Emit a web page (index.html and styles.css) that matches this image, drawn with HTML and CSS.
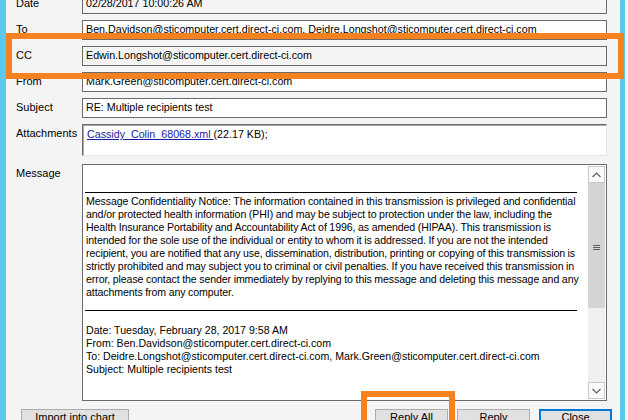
FILE: index.html
```html
<!DOCTYPE html>
<html lang="en">
<head>
    <meta charset="UTF-8">
    <title>Message</title>
    <link rel="stylesheet" href="styles.css">
</head>
<body>
    <div class="window">
        <div class="edge left"></div>
        <div class="main">
            <div class="form">
                <div class="label">Date</div>
                <div class="field readonly">02/28/2017 10:00:26 AM</div>

                <div class="label">To</div>
                <div class="field">Ben.Davidson@sticomputer.cert.direct-ci.com, Deidre.Longshot@sticomputer.cert.direct-ci.com</div>

                <div class="label">CC</div>
                <div class="field readonly">Edwin.Longshot@sticomputer.cert.direct-ci.com</div>

                <div class="label">From</div>
                <div class="field">Mark.Green@sticomputer.cert.direct-ci.com</div>

                <div class="label">Subject</div>
                <div class="field">RE: Multiple recipients test</div>

                <div class="label">Attachments</div>
                <div class="field attach"><a class="link">Cassidy_Colin_68068.xml </a>(22.17 KB);</div>

                <div class="label msg-label">Message</div>
                <div class="field message">
                    <div class="body">
                        <div class="rule first"></div>
                        <div class="notice">
                            <div class="line">Message Confidentiality Notice: The information contained in this transmission is privileged and confidential</div>
                            <div class="line">and/or protected health information (PHI) and may be subject to protection under the law, including the</div>
                            <div class="line">Health Insurance Portability and Accountability Act of 1996, as amended (HIPAA). This transmission is</div>
                            <div class="line">intended for the sole use of the individual or entity to whom it is addressed. If you are not the intended</div>
                            <div class="line">recipient, you are notified that any use, dissemination, distribution, printing or copying of this transmission is</div>
                            <div class="line">strictly prohibited and may subject you to criminal or civil penalties. If you have received this transmission in</div>
                            <div class="line">error, please contact the sender immediately by replying to this message and deleting this message and any</div>
                            <div class="line">attachments from any computer.</div>
                        </div>
                        <div class="rule second"></div>
                        <div class="line">Date: Tuesday, February 28, 2017 9:58 AM</div>
                        <div class="line">From: Ben.Davidson@sticomputer.cert.direct-ci.com</div>
                        <div class="line">To: Deidre.Longshot@sticomputer.cert.direct-ci.com, Mark.Green@sticomputer.cert.direct-ci.com</div>
                        <div class="line">Subject: Multiple recipients test</div>
                    </div>
                    <div class="scrollbar">
                        <div class="arrow">
                            <svg width="9" height="6" viewBox="0 0 9 6"><path d="M0.5 5 L4.5 1 L8.5 5" fill="none" stroke="#606060" stroke-width="1.2"/></svg>
                        </div>
                        <div class="thumb">
                            <svg width="7" height="7" viewBox="0 0 7 7"><path d="M0 1.5 H7 M0 3.5 H7 M0 5.5 H7" stroke="#606060" stroke-width="1"/></svg>
                        </div>
                        <div class="track"></div>
                        <div class="arrow down">
                            <svg width="9" height="6" viewBox="0 0 9 6"><path d="M0.5 1 L4.5 5 L8.5 1" fill="none" stroke="#606060" stroke-width="1.2"/></svg>
                        </div>
                    </div>
                </div>
            </div>
            <div class="buttons">
                <button class="btn import">Import into chart</button>
                <div class="btn-group">
                    <button class="btn">Reply All</button>
                    <button class="btn">Reply</button>
                    <button class="btn default">Close</button>
                </div>
            </div>
        </div>
        <div class="edge right"></div>
        <div class="outside"></div>

        <div class="highlight cc-mark"></div>
        <div class="highlight reply-mark"></div>
    </div>
</body>
</html>
```

FILE: styles.css
```css
body {
    margin: 0;
    background: #f4f4f4;
    font-family: "Liberation Sans", Arial, sans-serif;
    font-size: 10.7px;
    color: #000;
    overflow: hidden;
}
.window {
    position: relative;
    display: flex;
    width: 628px;
    height: 420px;
    overflow: hidden;
}
.edge {
    width: 6px;
    background: #5cc8ee;
}
.edge.right {
    width: 5px;
}
.outside {
    width: 3px;
    background: #f6f6f6;
}
.main {
    width: 614px;
    padding-left: 10px;
    box-sizing: border-box;
}
.form {
    display: grid;
    grid-template-columns: 66px 525px;
    row-gap: 6px;
    margin-top: -6px;
}
.label {
    padding-top: 3px;
    line-height: 13px;
    font-size: 11px;
}
.field {
    height: 20px;
    box-sizing: border-box;
    border: 1px solid #6b6b6b;
    background: #fff;
    padding: 2px 3px 0;
    line-height: 13px;
    white-space: nowrap;
    overflow: hidden;
}
.field.readonly {
    background: #f4f4f4;
}
.field.attach {
    height: 32px;
    border-color: #6b6b6b #e6e6e6 #e6e6e6 #6b6b6b;
    box-shadow: inset 1px 1px #a8a8a8;
    padding: 3px 3px 0 4px;
}
.link {
    color: #1a1aa0;
    text-decoration: underline;
}
.msg-label {
    margin-top: 2px;
}
.field.message {
    margin-top: 2px;
    height: 237px;
    padding: 0;
    display: flex;
}
.body {
    flex: 1;
    min-width: 0;
    overflow: hidden;
    padding-left: 3px;
    font-size: 10.6px;
}
.notice {
    letter-spacing: -0.1px;
    word-spacing: -0.2px;
}
.rule {
    width: 492px;
    height: 1px;
    background: #000;
    margin-left: -1px;
}
.rule.first {
    margin-top: 27px;
    margin-bottom: 2px;
}
.rule.second {
    margin-top: 11px;
    margin-bottom: 13px;
}
.line {
    line-height: 13px;
    height: 13px;
}
.scrollbar {
    flex: none;
    width: 17px;
    margin: 1px 1px 1px 0;
    display: flex;
    flex-direction: column;
    background: #f0f0f0;
}
.arrow {
    height: 17px;
    box-sizing: border-box;
    border: 1px solid #c8c8c8;
    background: #fafafa;
    display: flex;
    align-items: center;
    justify-content: center;
}
.thumb {
    height: 125px;
    background: #d4d4d4;
    display: flex;
    align-items: center;
    justify-content: center;
    padding-top: 4px;
    box-sizing: border-box;
}
.track {
    flex: 1;
}
.buttons {
    display: flex;
    justify-content: space-between;
    margin-top: 8px;
    padding-left: 5px;
    width: 591px;
}
.btn-group {
    display: flex;
    gap: 9px;
}
.btn {
    height: 23px;
    width: 73px;
    box-sizing: border-box;
    border: 1px solid #adadad;
    background: #e1e1e1;
    font-family: "Liberation Sans", Arial, sans-serif;
    font-size: 11px;
    line-height: 13px;
    padding: 1px 0 0;
    color: #000;
    text-align: center;
    display: flex;
    justify-content: center;
    align-items: flex-start;
}
.btn.import {
    width: 108px;
}
.btn.default {
    border-color: #0078d7;
    box-shadow: inset 0 0 0 1px #0078d7;
}
.highlight {
    position: absolute;
    border: 6px solid #f5821f;
    box-sizing: border-box;
}
.cc-mark {
    left: 6px;
    top: 33px;
    width: 618px;
    height: 46px;
}
.reply-mark {
    left: 361px;
    top: 391px;
    width: 94px;
    height: 40px;
}
```
